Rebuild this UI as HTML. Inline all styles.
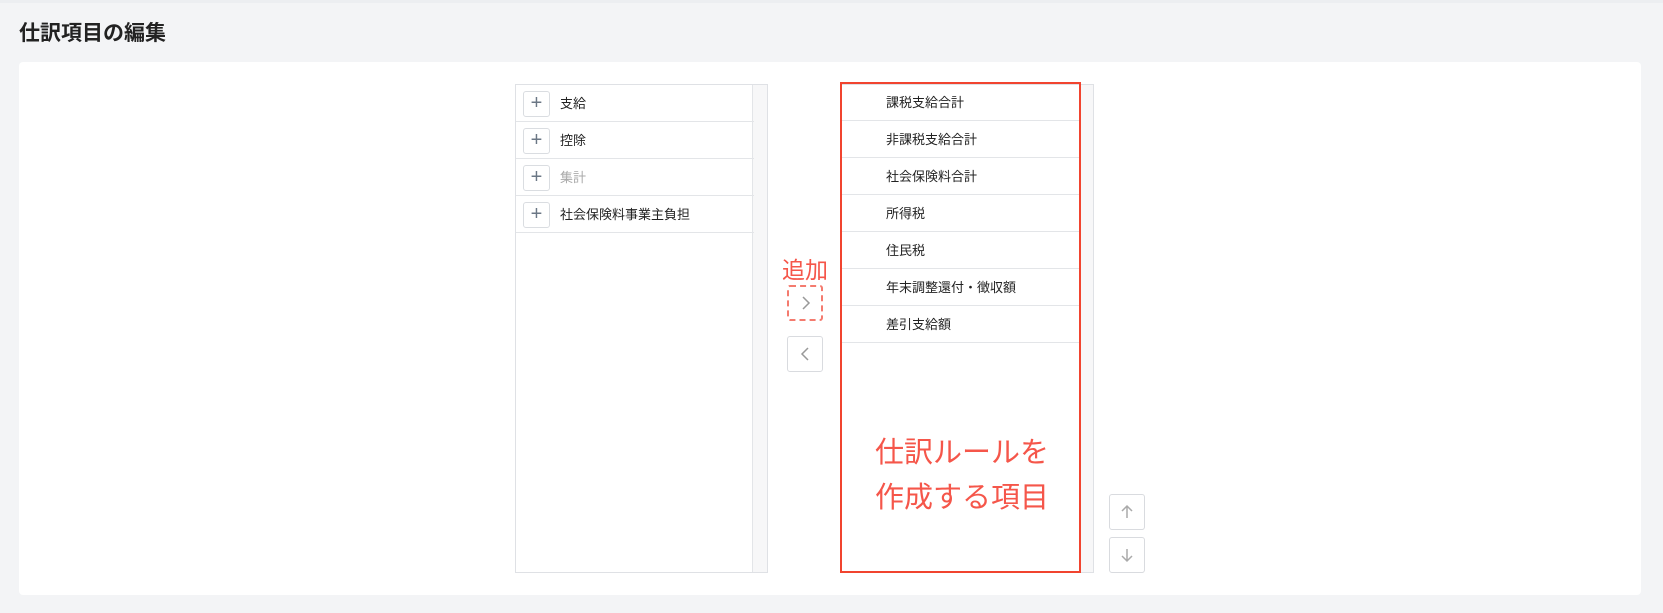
<!DOCTYPE html>
<html><head><meta charset="utf-8"><style>
*{box-sizing:border-box;margin:0;padding:0}
body{width:1663px;height:613px;background:#f3f4f6;font-family:"Liberation Sans","Noto Sans CJK JP",sans-serif;position:relative;overflow:hidden;color:#222}
.top{position:absolute;left:0;top:0;width:1663px;height:3px;background:#eceef1}
h1{position:absolute;left:19px;top:17px;font-size:21px;font-weight:bold;color:#222}
.card{position:absolute;left:19px;top:62px;width:1622px;height:533px;background:#fff;border-radius:4px}
.panel{position:absolute;border:1px solid #dfe1e5;background:#fff}
.sb{position:absolute;top:0;bottom:0;right:0;background:#f7f7f8;border-left:1px solid #e3e5e8}
.row{position:absolute;left:0;height:37px;border-bottom:1px solid #e3e5e8;font-size:13px;line-height:38px}
.plus{position:absolute;left:7px;top:6px;width:27px;height:26px;border:1px solid #dadde1;border-radius:3px;color:#6b7785;font-size:20px;line-height:23px;text-align:center}
.btn{position:absolute;width:36px;height:36px;border:1px solid #d9dbdf;border-radius:3px;background:#fff}
.red{color:#f5564a}
</style></head><body>
<div class="top"></div>
<h1>仕訳項目の編集</h1>
<div class="card"></div>
<div class="panel" style="left:515px;top:84px;width:253px;height:489px">
 <div class="sb" style="width:15px"></div>
 <div class="row" style="top:0;width:238px"><div class="plus">+</div><span style="position:absolute;left:44px">支給</span></div>
 <div class="row" style="top:37px;width:238px"><div class="plus">+</div><span style="position:absolute;left:44px">控除</span></div>
 <div class="row" style="top:74px;width:238px"><div class="plus">+</div><span style="position:absolute;left:44px;color:#aaa">集計</span></div>
 <div class="row" style="top:111px;width:238px"><div class="plus">+</div><span style="position:absolute;left:44px">社会保険料事業主負担</span></div>
</div>
<div class="red" style="position:absolute;left:782px;top:251px;font-size:23px">追加</div>
<div class="btn" style="left:787px;top:285px;border:2px dashed #f47b6f"><svg width="32" height="32" viewBox="0 0 32 32" style="position:absolute;left:0;top:0"><path d="M14 10l6 6-6 6" fill="none" stroke="#999" stroke-width="1.5"/></svg></div>
<div class="btn" style="left:787px;top:336px"><svg width="34" height="34" viewBox="0 0 34 34"><path d="M20 11l-6 6 6 6" fill="none" stroke="#999" stroke-width="1.5"/></svg></div>
<div class="panel" style="left:841px;top:84px;width:253px;height:489px">
 <div class="sb" style="width:14px"></div>
</div>
<div style="position:absolute;left:840px;top:82px;width:241px;height:491px;border:2px solid #f1442f">
 <div class="row" style="top:0;width:237px"><span style="position:absolute;left:44px">課税支給合計</span></div>
 <div class="row" style="top:37px;width:237px"><span style="position:absolute;left:44px">非課税支給合計</span></div>
 <div class="row" style="top:74px;width:237px"><span style="position:absolute;left:44px">社会保険料合計</span></div>
 <div class="row" style="top:111px;width:237px"><span style="position:absolute;left:44px">所得税</span></div>
 <div class="row" style="top:148px;width:237px"><span style="position:absolute;left:44px">住民税</span></div>
 <div class="row" style="top:185px;width:237px"><span style="position:absolute;left:44px">年末調整還付・徴収額</span></div>
 <div class="row" style="top:222px;width:237px"><span style="position:absolute;left:44px">差引支給額</span></div>
 <div class="red" style="position:absolute;left:33px;top:347px;font-size:29px;line-height:45px;white-space:nowrap">仕訳ルールを<br>作成する項目</div>
</div>
<div class="btn" style="left:1109px;top:494px"><svg width="34" height="34" viewBox="0 0 34 34"><path d="M17 11v12M12 16l5-5 5 5" fill="none" stroke="#aaa" stroke-width="1.5"/></svg></div>
<div class="btn" style="left:1109px;top:537px"><svg width="34" height="34" viewBox="0 0 34 34"><path d="M17 11v12M12 18l5 5 5-5" fill="none" stroke="#aaa" stroke-width="1.5"/></svg></div>
</body></html>
